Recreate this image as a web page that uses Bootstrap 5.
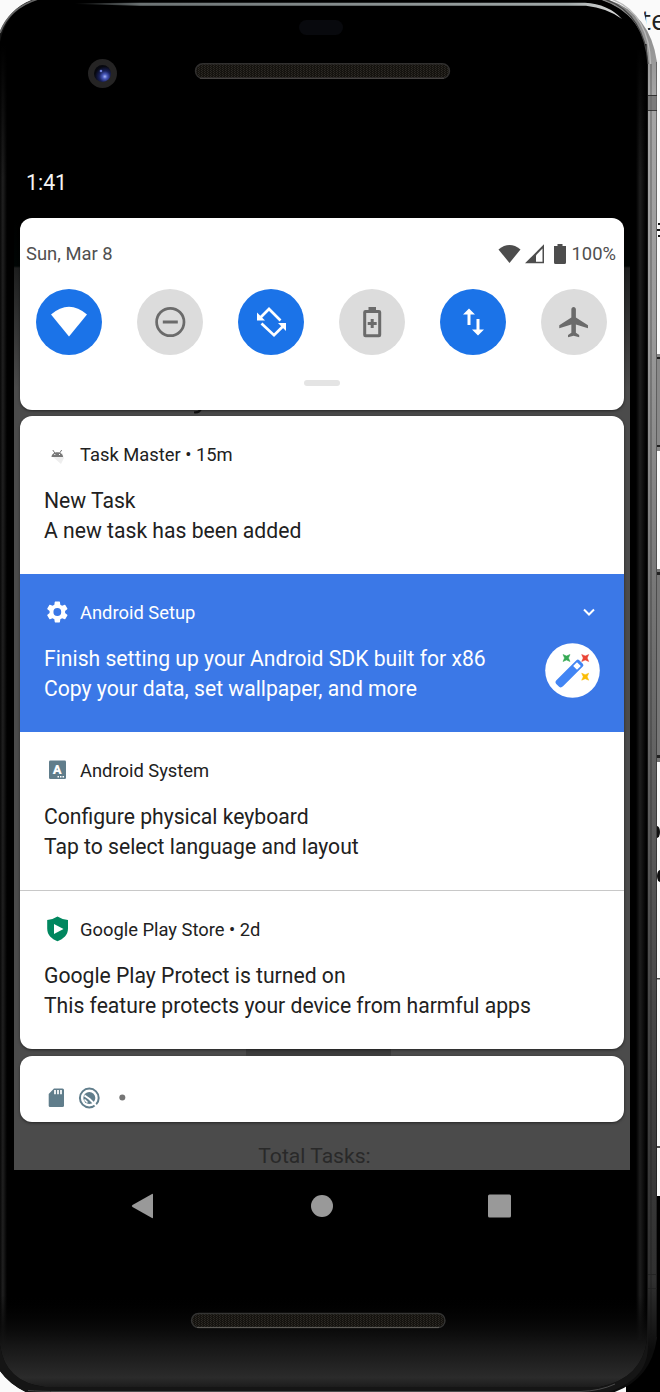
<!DOCTYPE html>
<html lang="en">
<head>
<meta charset="utf-8">
<meta name="viewport" content="width=device-width, initial-scale=1">
<title>Notification shade</title>
<link href="https://cdn.jsdelivr.net/npm/bootstrap@5.3.0/dist/css/bootstrap.min.css" rel="stylesheet">
<style>
body{font-family:Roboto,"Noto Sans",sans-serif;background:#fafafa;color:#212121}
.device{width:660px;height:1392px}
.frame{z-index:0}
.display{z-index:1;width:616px;height:1170px;margin-left:14px}
.scrim{height:952px;background:linear-gradient(#000 0,#000504 48px,#1d1e1e 50px,#4b4b4b 170px)}
.clock{height:218px;padding:169px 0 0 12px;font-size:21.3px;line-height:28px;color:#f5f5f5}
.sheet{margin:0 6px;border-radius:12px;background:#fff;box-shadow:0 1px 3px rgba(0,0,0,.5)}
.quick{height:191.5px;padding:22px 8px 0 6px}
.status{font-size:18.4px;line-height:27px;color:#505050}
.tiles{margin:22px 9px 0 10px}
.tile{width:66px;height:66px;background:#dcdcdc;color:#6b6b6b}
.tile.on{background:#1b73e8;color:#fff}
.handle{width:36px;height:6px;margin:25px auto 0;background:#e4e4e4;left:.6px}
.notices{height:633px;margin-top:6.5px}
.notice{height:158px;padding:24px 24px 0}
.notice.rule{height:159px;border-bottom:1px solid #c8c8c8}
.notice.blue{background:#3b78e7;color:#fff}
.app{font-size:18.35px;line-height:28px;height:28px}
.app span{padding-top:1.5px}
.app svg{width:26px;height:26px;margin-right:10px}
.app .chevron{margin-right:-2px}
.body-text{font-size:21.15px;line-height:30px;padding-top:17.5px;white-space:nowrap}
.wand{width:55px;height:55px;right:24px;top:69px}
.more{height:66px;margin-top:7px;padding:30px 26px 0}
.battery{margin:0 6px 0 9px}
.peek{left:180px;top:191px;width:9px;height:6px}
.behind{left:232px;top:831px;width:145px;height:7px;background:#3c3c3c}
.total{font-size:21.1px;line-height:30px;padding-top:19px;padding-right:15px;color:#292929;height:48px}
.softkeys{height:72px;width:394px;margin-left:125px;z-index:1}
</style>
</head>
<body class="m-0">
<main class="device position-relative overflow-hidden">
<svg class="frame position-absolute top-0 start-0" width="660" height="1392" viewBox="0 0 660 1392" aria-hidden="true">
  <defs>
    <linearGradient id="rail" x1="0" y1="0" x2="0" y2="1392" gradientUnits="userSpaceOnUse"><stop offset="0" stop-color="#858585"/><stop offset=".07" stop-color="#a6a6a6"/><stop offset=".24" stop-color="#9a9a9a"/><stop offset=".48" stop-color="#6c6c6c"/><stop offset=".72" stop-color="#484848"/><stop offset=".92" stop-color="#303030"/><stop offset=".97" stop-color="#0c0c0c"/></linearGradient>
    <linearGradient id="chin" x1="0" y1="1295" x2="0" y2="1387" gradientUnits="userSpaceOnUse"><stop offset="0" stop-color="#000" stop-opacity="0"/><stop offset=".35" stop-color="#0b0b0b" stop-opacity=".8"/><stop offset=".55" stop-color="#161616"/><stop offset=".9" stop-color="#2b2b2b"/><stop offset="1" stop-color="#1c1c1c"/></linearGradient>
    <linearGradient id="shine" x1="75" x2="622" y1="0" y2="0" gradientUnits="userSpaceOnUse"><stop offset="0" stop-color="#000"/><stop offset=".12" stop-color="#6c7374"/><stop offset=".9" stop-color="#a0a8a8"/><stop offset="1" stop-color="#ddd"/></linearGradient>
    <linearGradient id="side" x1="636" x2="646" y1="0" y2="0" gradientUnits="userSpaceOnUse"><stop offset="0" stop-color="#000"/><stop offset=".4" stop-color="#1d1d1d"/><stop offset="1" stop-color="#000"/></linearGradient>
    <linearGradient id="lside" x1="0" x2="7" y1="0" y2="0" gradientUnits="userSpaceOnUse"><stop offset="0" stop-color="#070707"/><stop offset=".4" stop-color="#202020"/><stop offset="1" stop-color="#000"/></linearGradient>
    <linearGradient id="fade" x1="0" y1="45" x2="0" y2="180" gradientUnits="userSpaceOnUse"><stop offset="0" stop-color="#000"/><stop offset="1" stop-color="#000" stop-opacity="0"/></linearGradient>
    <radialGradient id="lens" cx=".64" cy=".68" r=".6"><stop offset="0" stop-color="#a9b8f5"/><stop offset=".22" stop-color="#4c5cc0"/><stop offset=".55" stop-color="#18205a"/><stop offset="1" stop-color="#07080f"/></radialGradient>
    <pattern id="mesh" width="3" height="2" patternUnits="userSpaceOnUse"><rect width="3" height="2" fill="#15130f"/><rect width="1" height="1" fill="#2d2a25"/><rect x="1" y="1" width="1" height="1" fill="#282520"/></pattern>
    <clipPath id="edge"><path d="M642 5h18v40h-8z"/></clipPath>
  </defs>
  <rect width="660" height="1392" fill="#fafafa"/>
  <rect x="656" y="1196" width="4" height="196" fill="#000"/><rect x="626" y="1300" width="34" height="92" fill="#000"/>
  <g fill="#111"><rect x="656" y="978" width="4" height="1.5" fill="#555"/><rect x="656" y="1146" width="4" height="2" fill="#555"/><path d="M658 223h2v2h-2zM657 229h3v2h-3zM658 235h2v2h-2z"/><ellipse cx="657" cy="832" rx="3" ry="6"/><ellipse cx="660" cy="876" rx="3" ry="6"/></g>
  <path d="M656 354h4v97h-4z" fill="#898989"/><path d="M656 569h4v193h-4z" fill="#777"/><path d="M656 357h4v2h-4zM656 445h4v2h-4zM656 572h4v3h-4zM656 755h4v3h-4z" fill="#222"/>
  <path d="M40 -1C18 5 4 18-2 36V1368Q8 1384 28 1393H612Q651 1380 657 1338V62Q650 12 606-1Z" fill="url(#rail)"/>
  <path d="M34-1C15 6 3 19-2 40V1368Q8 1384 28 1393H606C640 1382 649 1364 648 1342V62Q644 13 598-1Z" fill="#151515"/>
  <path d="M38-1C18 6 4 20 0 42V1345Q5 1382 45 1387H600Q642 1378 647 1340V60C645 28 628 8 598-1Z" fill="#000"/>
  <path d="M0 45h7v1300H0z" fill="url(#lside)"/>
  <path d="M636 50h10v1290h-10z" fill="url(#side)"/>
  <path d="M0 44h8v137H0zM635 44h11.500v137H635z" fill="url(#fade)"/>
  <path d="M0 1295V1345Q5 1382 45 1387H600Q642 1378 647 1340V1295Z" fill="url(#chin)"/>
  <path d="M0 33Q9 8 38-1" fill="none" stroke="#686868" stroke-width="1.6"/>
  <path d="M651 64V1335" stroke="#111" stroke-opacity=".45" fill="none"/>
  <path d="M656.500 62V1337" stroke="#000" stroke-opacity=".35"/>
  <path d="M611-1C638 8 650 34 650.500 64" fill="none" stroke="#bbb" stroke-width="1.3"/>
  <path d="M604-1C633 8 646 34 648 64" fill="none" stroke="#444" stroke-width="1.2"/>
  <path d="M648 95h9v15h-9z" fill="#666" fill-opacity=".65"/><path d="M648 95.500h9M648 110.500h9M648 1274.500h9M648 1288.500h9" stroke="#222" stroke-opacity=".8"/>
  <path d="M75 3.200L140 2.800H585Q608 4 622 19 607 8 586 5.800H140L75 4z" fill="url(#shine)"/>
  <path d="M28 1390.500Q40 1391.500 60 1391.500H580Q600 1391 615 1384" fill="none" stroke="#4a4a4a"/>
  <rect x="299" y="20" width="44" height="15" rx="7.500" fill="#08090d"/>
  <circle cx="102.500" cy="73.500" r="14.500" fill="#252424"/><circle cx="102.500" cy="73.500" r="8.500" fill="url(#lens)"/><circle cx="101" cy="71" r="1.300" fill="#6b7dd9"/>
  <rect x="195.500" y="63.700" width="254" height="14.600" rx="7.300" fill="url(#mesh)" stroke="#302f2e" stroke-width="1.400"/><path d="M200 78.300h244" stroke="#4b4946"/>
  <rect x="191.500" y="1313.500" width="253.500" height="14" rx="7" fill="url(#mesh)" stroke="#343433" stroke-width="1.400"/><path d="M197 1327.500h242" stroke="#5c5a56"/>
  <text x="641" y="30" font-family="Open Sans, sans-serif" font-size="28" fill="#222" clip-path="url(#edge)">te</text>
</svg>

<section class="display position-relative">
  <div class="clock">1:41</div>
  <div class="scrim position-relative">
    <svg class="peek position-absolute" viewBox="0 0 9 6"><path d="M0 3.200Q5 4.500 7.500-1" fill="none" stroke="#111" stroke-width="2.200"/></svg>
    <div class="behind position-absolute"></div>
    <div class="sheet quick position-relative">
      <div class="status d-flex align-items-center">
        <span class="me-auto">Sun, Mar 8</span>
        <svg width="23" height="20" viewBox="0 0 23 20" fill="#4d4d4d"><path d="M.5 5.500Q11.500-3.300 22.500 5.500L11.500 19z"/></svg>
        <svg class="ms-1" width="20" height="20" viewBox="0 0 20 20"><path d="M0 19.300L19 .3v19z" fill="#4d4d4d"/><path d="M11 11.300L17.500 4.500V17.800H11z" fill="#fff"/></svg>
        <svg class="battery" width="12" height="20" viewBox="0 0 12 20" fill="#4d4d4d"><path d="M3.500 0h5v2H12v16.500q0 1.500-1.500 1.500h-9Q0 20 0 18.500V2h3.500z"/></svg>
        <span>100%</span>
      </div>
      <div class="tiles d-flex justify-content-between">
        <div class="tile on rounded-circle"><svg width="66" height="66" viewBox="0 0 66 66" fill="currentColor"><path d="M15 25.500Q33 10 51 25.500L33 47.500z"/></svg></div>
        <div class="tile rounded-circle"><svg width="66" height="66" viewBox="0 0 66 66" fill="none" stroke="currentColor"><circle cx="33.300" cy="33" r="13.700" stroke-width="2.700"/><path d="M25.800 33h15" stroke-width="3"/></svg></div>
        <div class="tile on rounded-circle"><svg width="66" height="66" viewBox="0 0 66 66" fill="none" stroke="currentColor" stroke-width="2.700"><path d="M22.500 28.500L31 20 42.500 31.500M23.500 34.500L36 46.200l8.500-8.500"/><path d="M19 23.500v8h8zM48 42v-8h-8z" fill="currentColor" stroke="none"/></svg></div>
        <div class="tile rounded-circle"><svg width="66" height="66" viewBox="0 0 66 66"><path d="M29.500 18h7.500v3.500h-7.500z" fill="currentColor"/><rect x="25.700" y="22.500" width="15" height="24.200" rx=".8" fill="none" stroke="currentColor" stroke-width="3"/><path d="M33.200 30v9M28.700 34.500h9" stroke="currentColor" stroke-width="3"/></svg></div>
        <div class="tile on rounded-circle"><svg width="66" height="66" viewBox="0 0 66 66" fill="currentColor"><path d="M23 25.500l6-6 6 6h-4.500V36h-3V25.500zM32 40.500h4.500V30h3v10.500H44l-6 6z"/></svg></div>
        <div class="tile rounded-circle"><svg width="66" height="66" viewBox="0 0 66 66" fill="currentColor"><g transform="translate(14.500 15) scale(1.510)"><path d="M21.500 16v-2l-8-5V3.500c0-.83-.67-1.500-1.500-1.500s-1.500.67-1.500 1.500V9l-8 5v2l8-2.500V19l-2.200 1.600V22l3.700-1 3.700 1v-1.400L13.500 19v-5.500z"/></g></svg></div>
      </div>
      <div class="handle rounded-pill position-relative"></div>
    </div>
    <div class="sheet notices overflow-hidden position-relative">
      <article class="notice">
        <div class="app d-flex align-items-center"><svg viewBox="0 0 26 26"><path d="M9 16l9.500-4 1.500 5-3 6z" fill="#eee"/><path d="M7.500 16c0-6.500 11.500-6.500 11.500 0z" fill="#777"/><path d="M8.800 9l2 3M17.700 9l-2 3" stroke="#777"/><path d="M10.300 13.500h1M15 13.500h1" stroke="#fff"/></svg><span>Task Master&nbsp;•&nbsp;15m</span></div>
        <div class="body-text"><div>New Task</div><div>A new task has been added</div></div>
      </article>
      <article class="notice blue position-relative">
        <div class="app d-flex align-items-center"><svg viewBox="0 0 24 24" fill="#fff"><path transform="translate(.3 0)" d="M19.140 12.940c.04-.3.06-.61.060-.94s-.02-.64-.07-.94l2.030-1.580a.49.49 0 0 0 .12-.61l-1.920-3.320a.49.49 0 0 0-.59-.22l-2.390.96c-.5-.38-1.030-.7-1.620-.94l-.36-2.540A.48.48 0 0 0 13.920 2.400h-3.840a.48.48 0 0 0-.47.41l-.36 2.540c-.59.24-1.130.57-1.620.94l-2.390-.96a.48.48 0 0 0-.59.22L2.740 8.870a.48.48 0 0 0 .12.61l2.030 1.580a7 7 0 0 0 0 1.880l-2.030 1.580a.49.49 0 0 0-.12.61l1.920 3.320c.12.22.37.29.59.22l2.390-.96c.5.38 1.030.7 1.620.94l.36 2.540c.05.24.24.41.48.41h3.840c.24 0 .44-.17.47-.41l.36-2.540c.59-.24 1.130-.56 1.620-.94l2.390.96c.22.08.47 0 .59-.22l1.920-3.320a.48.48 0 0 0-.12-.61zM12 15.600a3.600 3.600 0 1 1 0-7.200 3.600 3.600 0 0 1 0 7.200z"/></svg><span class="me-auto">Android Setup</span><svg class="chevron" viewBox="0 0 26 26" fill="none" stroke="#fff" stroke-width="2"><path d="M8 10.500l5 5 5-5"/></svg></div>
        <div class="body-text"><div>Finish setting up your Android SDK built for x86</div><div>Copy your data, set wallpaper, and more</div></div>
        <svg class="wand position-absolute" viewBox="0 0 55 55"><circle cx="27.500" cy="27.500" r="27.300" fill="#fff"/><g transform="rotate(45 24 31)"><path d="M21.500 14h5q2 0 2 2v28q0 3-2.500 3h-4q-2.500 0-2.500-3V16q0-2 2-2z" fill="#4285f4"/><rect x="21.300" y="17" width="5.400" height="5.400" fill="#fff"/></g><path d="M18 11.500l3.500 1.500 3.500-1.500-1.500 3.500 1.500 3.500-3.500-1.500-3.500 1.500 1.500-3.500z" fill="#34a853" stroke="#34a853" stroke-width=".5"/><path d="M36.700 11.500l3.500 1.500 3.500-1.500-1.500 3.500 1.500 3.500-3.500-1.500-3.500 1.500 1.500-3.500z" fill="#ea4335" stroke="#ea4335" stroke-width=".5"/><path d="M36.700 30.200l3.500 1.500 3.500-1.500-1.500 3.500 1.500 3.500-3.500-1.500-3.500 1.500 1.500-3.500z" fill="#fbbc04" stroke="#fbbc04" stroke-width=".5"/></svg>
      </article>
      <article class="notice rule">
        <div class="app d-flex align-items-center"><svg viewBox="0 0 26 26"><rect x="5" y="3.500" width="17" height="18.500" rx="1.300" fill="#607d8b"/><text x="13.300" y="17" text-anchor="middle" font-size="13" font-weight="900" fill="#fff">A</text><path d="M13.500 19.800h7" stroke="#fff" stroke-width="1.500" stroke-dasharray="1.500 1"/></svg><span>Android System</span></div>
        <div class="body-text"><div>Configure physical keyboard</div><div>Tap to select language and layout</div></div>
      </article>
      <article class="notice">
        <div class="app d-flex align-items-center"><svg viewBox="0 0 26 26"><path d="M13.500.5Q18 3.500 24 4v8.500C24 19 19.500 22.800 13.500 25.300 7.500 22.800 3.200 19 3.200 12.500V4Q9 3.500 13.500.5z" fill="#01875f"/><path d="M10 8v10l9.500-5z" fill="#fff"/></svg><span>Google Play Store&nbsp;•&nbsp;2d</span></div>
        <div class="body-text"><div>Google Play Protect is turned on</div><div>This feature protects your device from harmful apps</div></div>
      </article>
    </div>
    <div class="sheet more d-flex">
      <svg width="84" height="24" viewBox="0 0 84 24"><path d="M8 2.500h8.500q1.500 0 1.500 1.500v15.500q0 1.500-1.500 1.500H4q-1.300 0-1.300-1.500V8z" fill="#607d8b"/><path d="M9 4v4.300M12 4v4.300M15 4v4.300" stroke="#fff" stroke-width="1.700"/><circle cx="43.300" cy="12" r="9.400" fill="none" stroke="#607d8b" stroke-width="2"/><circle cx="43.300" cy="12" r="6" fill="#607d8b"/><path d="M38.500 9.500l5 3.500 7.500 7.500" fill="none" stroke="#fff" stroke-width="2"/><path d="M38.500 13.500l3 3" stroke="#fff" stroke-width="1.500"/><circle cx="76.300" cy="11.500" r="3" fill="#757575"/></svg>
    </div>
    <div class="total text-center">Total Tasks:</div>
  </div>
</section>
<nav class="softkeys position-relative d-flex align-items-center justify-content-between" aria-label="System">
  <svg width="36" height="30" viewBox="0 0 36 30" fill="#999"><path d="M27.500 3q1-.5 1 .8v22.400q0 1.300-1 .8L8 16q-1.500-1 0-2z" transform="translate(-.5 0)"/></svg>
  <svg width="30" height="30" viewBox="0 0 30 30" fill="#999"><circle cx="15" cy="15" r="11"/></svg>
  <svg width="36" height="30" viewBox="0 0 36 30" fill="#999"><rect x="5" y="3.500" width="23" height="23" rx="1.500"/></svg>
</nav>
</main>
<script src="https://cdn.jsdelivr.net/npm/bootstrap@5.3.0/dist/js/bootstrap.bundle.min.js"></script>
</body>
</html>
